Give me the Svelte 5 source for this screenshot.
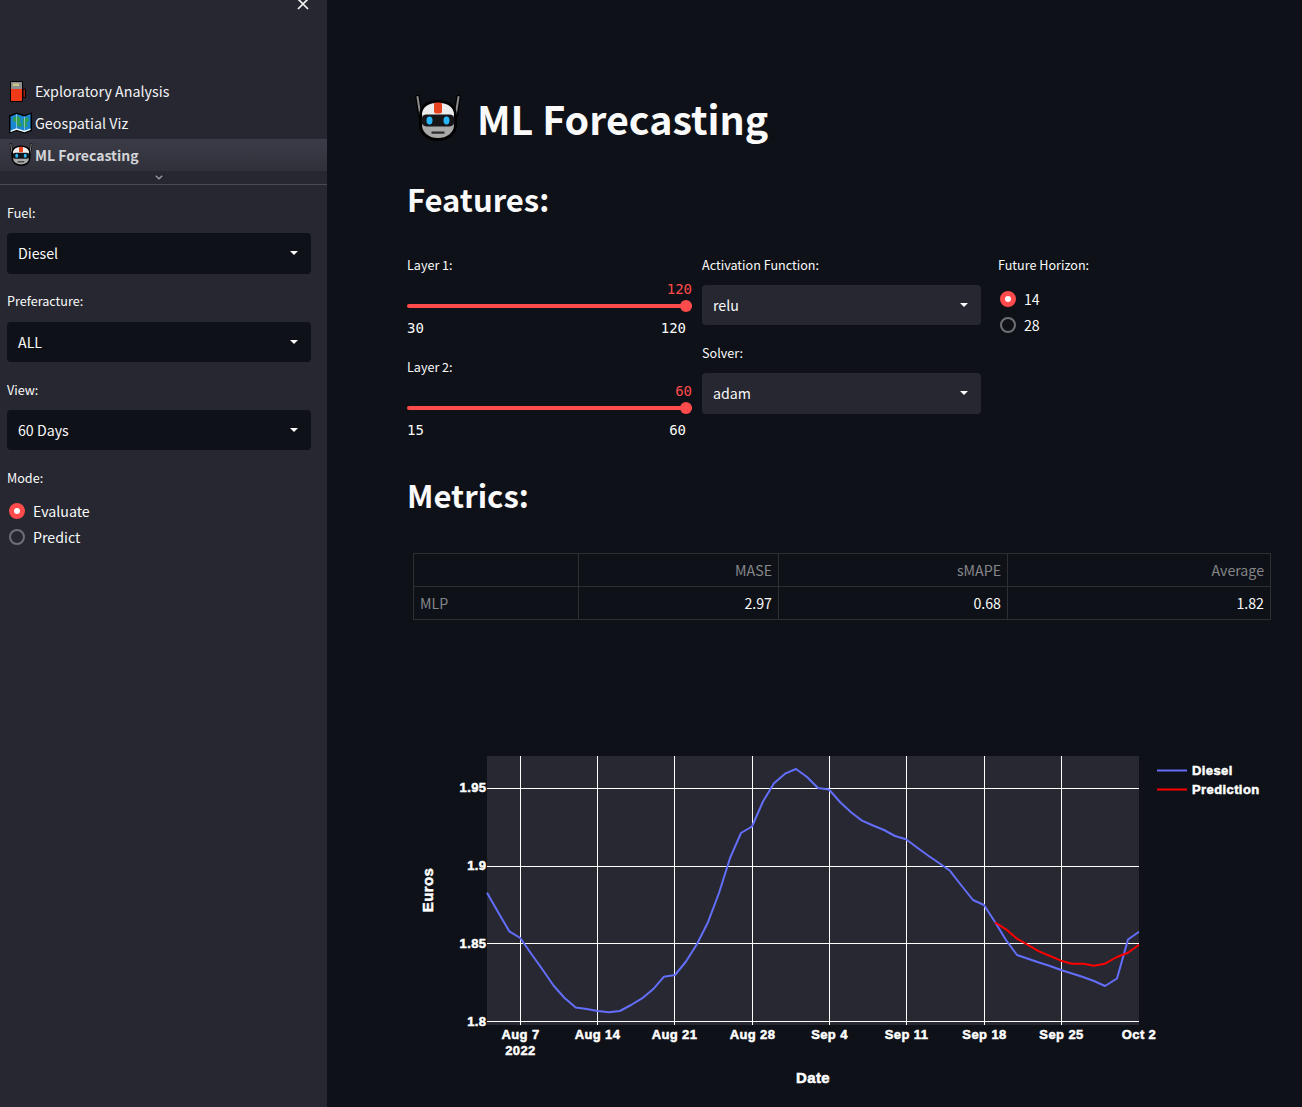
<script>
  const sidebarSelects = [
    { label: 'Fuel:', value: 'Diesel' },
    { label: 'Preferacture:', value: 'ALL' },
    { label: 'View:', value: '60 Days' }
  ];
  const sliders = [
    { label: 'Layer 1:', min: 30, max: 120 },
    { label: 'Layer 2:', min: 15, max: 60 }
  ];
  const mainSelects = [
    { label: 'Activation Function:', value: 'relu' },
    { label: 'Solver:', value: 'adam' }
  ];
  const rows = [['MLP', '2.97', '0.68', '1.82']];
  const hGrid = [
    { y: 788.5, ty: 791.5, t: '1.95' },
    { y: 866.5, ty: 869.5, t: '1.9' },
    { y: 943.5, ty: 947.5, t: '1.85' },
    { y: 1021.5, ty: 1025.5, t: '1.8' }
  ];
  const vGrid = [
    { x: 520.5, t: 'Aug 7' },
    { x: 597.5, t: 'Aug 14' },
    { x: 674.5, t: 'Aug 21' },
    { x: 752.5, t: 'Aug 28' },
    { x: 829.5, t: 'Sep 4' },
    { x: 906.5, t: 'Sep 11' },
    { x: 984.5, t: 'Sep 18' },
    { x: 1061.5, t: 'Sep 25' },
    { x: 1139, t: 'Oct 2' }
  ];
  const diesel = '487,892.7 498,912 509.3,931.3 520.3,938 531.4,954 542.5,969.5 553.5,985.5 564.6,998 575.7,1007.6 586.7,1009 597.8,1011 608.9,1012.3 619.9,1011 631,1005 642,998.4 653,989.3 664,976.7 675,975 686,961.5 697,944 708,922.2 719,893 730,858.2 741,833 752,826.5 763,801.5 774,783.2 785,773.7 796,769 807,777 818,788 829,789.5 840,802 851,812.2 862,820.6 873,825.5 884,830 895,836 906,839.2 917,847.5 928,855.5 939,863 950,870.8 961,885 973,900 984,905 995,922 1006,940 1017,955 1028,958.8 1039,962.5 1050,966 1061,970 1072,973.5 1083,977 1094,981 1105,986 1117,978.5 1128,939.5 1139,931.7';
  const prediction = '995,922.3 1006,929.3 1017,938.7 1028,945 1039,951.3 1050,956 1061,960.7 1072,963.7 1083,963.7 1094,965.7 1105,963.7 1117,957 1128,952.7 1139,944.7';
</script>

{#snippet robot(size)}
  <svg class="emoji" width={size} height={size} viewBox="6 6 48 48" aria-hidden="true">
    <path d="M9.5 8 12.500 27M50.500 8 47.500 27" stroke="#000" stroke-width="4.500" stroke-linecap="round" fill="none"/>
    <path d="M9.500 8 12.500 27M50.500 8 47.500 27" stroke="#8c8c8c" stroke-width="2" stroke-linecap="round" fill="none"/>
    <path d="M12.500 27C12.500 17 20 12.500 30 12.500S47.500 17 47.500 27V36C47.500 45 39 50.500 30 50.500S12.500 45 12.500 36Z" fill="#a9a9a9" stroke="#000" stroke-width="3"/>
    <path d="M14 26C14 18 21 14 30 14S46 18 46 26Z" fill="#ececec"/>
    <rect x="26" y="13.500" width="8" height="11" rx="2" fill="#e8421c"/>
    <rect x="13.500" y="25.500" width="33" height="12" rx="5" fill="#15151a"/>
    <ellipse cx="21.500" cy="31.500" rx="3" ry="4" fill="#27b6f6"/>
    <ellipse cx="38.500" cy="31.500" rx="3" ry="4" fill="#27b6f6"/>
    <rect x="23.500" y="42.500" width="13" height="2.200" fill="#2a2a2a"/>
  </svg>
{/snippet}

<div class="page">
  <aside class="sidebar">
    <button class="close" aria-label="Close sidebar">
      <svg width="12" height="12" viewBox="0 0 12 12"><path d="M1 1 11 11M11 1 1 11" stroke="#f2f2f2" stroke-width="1.7" fill="none"/></svg>
    </button>

    <nav class="nav">
      <a class="nav-item">
        <span class="nav-icon">
          <svg class="emoji" width="18" height="23" viewBox="0 0 18 23" aria-hidden="true">
            <path d="M14 9h2.500v8.500H14z" fill="#a3200f" stroke="#000" stroke-width="1"/>
            <rect x="1" y="1" width="13" height="21" rx="1.500" fill="#000"/>
            <rect x="2" y="2" width="11" height="7" fill="#8f8f8f"/>
            <rect x="4" y="3.500" width="6" height="2.500" fill="#c9c68a"/>
            <rect x="2" y="9" width="11" height="12" fill="#f03a17"/>
          </svg>
        </span>
        Exploratory Analysis
      </a>
      <a class="nav-item">
        <span class="nav-icon">
          <svg class="emoji" width="23" height="22" viewBox="0 0 23 22" aria-hidden="true">
            <path d="M0 3.500 7.500 .5l8 2.500L23 .5v18.500L15.500 21.500l-8-2.500L0 21.500Z" fill="#000"/>
            <path d="M1.500 4.400 7.500 2l8 2.500 6-2.400v16L15.500 20l-8-2.500-6 2.400Z" fill="#1b86d2"/>
            <path d="M4 6 9 4l3 3-1 3 2 2-1 3-4-1-1-4-3-1ZM14 7l5-2 1 4-3 2 2 3-4 2-1-4Z" fill="#2f9e52"/>
            <path d="M1.500 19.400 7.500 17l8 2.500 6-2.400" stroke="#eef3f6" stroke-width="1.400" fill="none"/>
            <path d="M7.500 2V17M15.500 4.500V19.500" stroke="#bfe0f2" stroke-width=".6" fill="none"/>
          </svg>
        </span>
        Geospatial Viz
      </a>
      <a class="nav-item active">
        <span class="nav-icon">{@render robot(24)}</span>
        ML Forecasting
      </a>
    </nav>

    <div class="chevron">
      <svg width="8" height="5" viewBox="0 0 8 5"><path d="M.8.8 4 3.800 7.200.8" stroke="#9a9ba3" stroke-width="1.300" fill="none"/></svg>
    </div>
    <hr class="divider" />

    <div class="side-form">
      {#each sidebarSelects as s}
        <div class="side-field">
          <div class="label">{s.label}</div>
          <div class="select dark">
            <span>{s.value}</span>
            <i class="caret"></i>
          </div>
        </div>
      {/each}

      <div class="label">Mode:</div>
      <div class="radios side">
        <div class="radio"><i class="dot on"></i>Evaluate</div>
        <div class="radio"><i class="dot"></i>Predict</div>
      </div>
    </div>
  </aside>

  <main class="main">
    <div class="title-row">
      <span class="title-icon">{@render robot(48)}</span>
      <h1>ML Forecasting</h1>
    </div>

    <h2 class="features">Features:</h2>

    <div class="controls">
      <div class="col">
        {#each sliders as s}
          <div class="slider">
            <div class="label">{s.label}</div>
            <div class="slider-value">{s.max}</div>
            <div class="track"><i class="thumb"></i></div>
            <div class="ticks"><span>{s.min}</span><span>{s.max}</span></div>
          </div>
        {/each}
      </div>

      <div class="col">
        {#each mainSelects as s}
          <div class="main-field">
            <div class="label">{s.label}</div>
            <div class="select">
              <span>{s.value}</span>
              <i class="caret"></i>
            </div>
          </div>
        {/each}
      </div>

      <div class="col horizon">
        <div class="label">Future Horizon:</div>
        <div class="radios">
          <div class="radio"><i class="dot on"></i>14</div>
          <div class="radio"><i class="dot"></i>28</div>
        </div>
      </div>
    </div>

    <h2 class="metrics">Metrics:</h2>

    <table>
      <colgroup><col class="c0" /><col class="c1" /><col class="c2" /><col class="c3" /></colgroup>
      <thead>
        <tr><th></th><th>MASE</th><th>sMAPE</th><th>Average</th></tr>
      </thead>
      <tbody>
        {#each rows as r}
          <tr>
            <th class="row-head">{r[0]}</th>
            <td>{r[1]}</td>
            <td>{r[2]}</td>
            <td>{r[3]}</td>
          </tr>
        {/each}
      </tbody>
    </table>

    <svg class="chart" width="894" height="367" viewBox="408 740 894 367">
      <rect x="487" y="756" width="652" height="269" fill="#282832"/>
      {#each hGrid as g}
        <line x1="487" x2="1139" y1={g.y} y2={g.y} class="grid"/>
        <text x="486.500" y={g.ty} text-anchor="end" class="tick">{g.t}</text>
      {/each}
      {#each vGrid as g}
        {#if g.x < 1139}
          <line x1={g.x} x2={g.x} y1="756" y2="1025" class="grid"/>
        {/if}
        <text x={g.x} y="1039" text-anchor="middle" class="tick">{g.t}</text>
      {/each}
      <text x="520.500" y="1055" text-anchor="middle" class="tick">2022</text>
      <polyline points={diesel} class="line diesel"/>
      <polyline points={prediction} class="line pred"/>
      <text x="813" y="1083" text-anchor="middle" class="axis">Date</text>
      <text x="0" y="0" transform="translate(432.500 890) rotate(-90)" text-anchor="middle" class="axis">Euros</text>
      <line x1="1157" x2="1187" y1="770.500" y2="770.500" class="line diesel"/>
      <text x="1192" y="775" class="tick">Diesel</text>
      <line x1="1157" x2="1187" y1="789.500" y2="789.500" class="line pred"/>
      <text x="1192" y="794" class="tick">Prediction</text>
    </svg>
  </main>
</div>

<style>
  :global(body) {
    margin: 0;
    background: #0e1117;
  }
  .page {
    display: flex;
    width: 1302px;
    height: 1107px;
    overflow: hidden;
    font-family: "Noto Sans CJK JP", "Noto Sans", sans-serif;
    color: #fafafa;
  }
  .sidebar {
    position: relative;
    flex: 0 0 327px;
    background: #262730;
    padding-top: 75px;
    box-sizing: border-box;
  }
  .close {
    position: absolute;
    top: -2px;
    left: 297px;
    padding: 0;
    border: 0;
    background: none;
    line-height: 0;
  }
  .nav-item {
    display: flex;
    align-items: center;
    height: 32px;
    padding-left: 9px;
    font-size: 14.3px;
    line-height: 20px;
    color: #f4f4f6;
  }
  .nav-icon {
    display: flex;
    flex: 0 0 26px;
  }
  .emoji {
    display: block;
  }
  .active {
    font-size: 14px;
    font-weight: 700;
    color: #d3d4d8;
    background: linear-gradient(#3b3c47, #2f3039);
  }
  .chevron {
    display: flex;
    justify-content: center;
    height: 13px;
    padding: 4px 10px 0 0;
    box-sizing: border-box;
    line-height: 0;
  }
  .divider {
    margin: 0;
    border: 0;
    height: 1px;
    background: #494a54;
  }
  .side-form {
    padding: 18px 16px 0 7px;
  }
  .label {
    font-size: 12.6px;
    line-height: 20px;
    color: #fafafa;
  }
  .side-field {
    margin-bottom: 17.8px;
  }
  .select {
    display: flex;
    align-items: center;
    justify-content: space-between;
    height: 40.4px;
    margin-top: 10.2px;
    padding: 0 13px 0 11px;
    box-sizing: border-box;
    border-radius: 4px;
    background: #262730;
    font-size: 14.2px;
    line-height: 20px;
  }
  .dark {
    background: #0e1117;
  }
  .caret {
    width: 0;
    height: 0;
    border-left: 4px solid transparent;
    border-right: 4px solid transparent;
    border-top: 4px solid #fafafa;
  }
  .radios {
    display: flex;
    flex-direction: column;
    gap: 6px;
    margin-top: 13px;
    font-size: 14.2px;
  }
  .radios.side {
    padding-left: 2px;
  }
  .radio {
    display: flex;
    align-items: center;
    gap: 8px;
    height: 20px;
    line-height: 20px;
  }
  .dot {
    box-sizing: border-box;
    flex: 0 0 16px;
    height: 16px;
    border: 2px solid #6f7076;
    border-radius: 50%;
  }
  .dot.on {
    border: 5px solid #ff4b4b;
    background: #fff;
  }
  .main {
    flex: 1;
    padding: 95px 0 0 81px;
    min-width: 0;
  }
  .title-row {
    display: flex;
    align-items: center;
    height: 48px;
    padding-left: 6px;
  }
  .title-icon {
    flex: 0 0 64px;
  }
  h1 {
    margin: -2px 0 0 -1px;
    font-size: 39.4px;
    line-height: 48px;
    font-weight: 700;
  }
  h2 {
    margin: 0 0 0 -1px;
    font-size: 31px;
    line-height: 40px;
    font-weight: 700;
  }
  .features {
    margin-top: 36px;
  }
  .controls {
    display: grid;
    grid-template-columns: 285px 279px auto;
    column-gap: 10px;
    margin-top: 36px;
    margin-left: -1px;
  }
  .slider {
    height: 102px;
  }
  .slider-value {
    margin-top: 5px;
    height: 18px;
    font: 14px/18px "DejaVu Sans Mono", monospace;
    color: #ff4b4b;
    text-align: right;
  }
  .track {
    position: relative;
    margin-top: 6px;
    height: 4px;
    border-radius: 2px;
    background: #ff4b4b;
  }
  .thumb {
    position: absolute;
    right: 0;
    top: -4px;
    width: 12px;
    height: 12px;
    border-radius: 50%;
    background: #ff4b4b;
  }
  .ticks {
    display: flex;
    justify-content: space-between;
    margin-top: 11px;
    padding-right: 6px;
    font: 14px/18px "DejaVu Sans Mono", monospace;
    color: #fafafa;
  }
  .main-field {
    height: 88.3px;
  }
  .main-field .select {
    margin-top: 10px;
  }
  .horizon {
    margin-left: 7px;
  }
  .horizon .radio {
    padding-left: 2px;
  }
  .horizon .radios {
    margin-top: 14px;
  }
  .metrics {
    margin-top: 16px;
  }
  table {
    margin: 38px 0 0 5px;
    width: 857px;
    table-layout: fixed;
    border-collapse: collapse;
    font-size: 14.2px;
  }
  .c0 { width: 165px; }
  .c1 { width: 200px; }
  .c2 { width: 229px; }
  .c3 { width: 263px; }
  th, td {
    height: 33px;
    padding: 0 6px;
    box-sizing: border-box;
    border: 1px solid #2d2f34;
    text-align: right;
    font-weight: 400;
    line-height: 20px;
  }
  th {
    color: #85868a;
  }
  .row-head {
    text-align: left;
  }
  td {
    color: #fafafa;
  }
  .chart {
    display: block;
    margin: 120px 0 0 0;
  }
  .grid {
    stroke: #fff;
    stroke-width: 1;
  }
  .tick, .axis {
    font-family: "Liberation Sans", Arial, sans-serif;
    font-weight: 700;
    fill: #fff;
    stroke: #fff;
    stroke-width: .5px;
    letter-spacing: .4px;
  }
  .tick {
    font-size: 13px;
  }
  .axis {
    font-size: 15px;
  }
  .line {
    fill: none;
    stroke-width: 2;
    stroke-linejoin: round;
  }
  .diesel {
    stroke: #636efa;
  }
  .pred {
    stroke: #ff0000;
  }
</style>
